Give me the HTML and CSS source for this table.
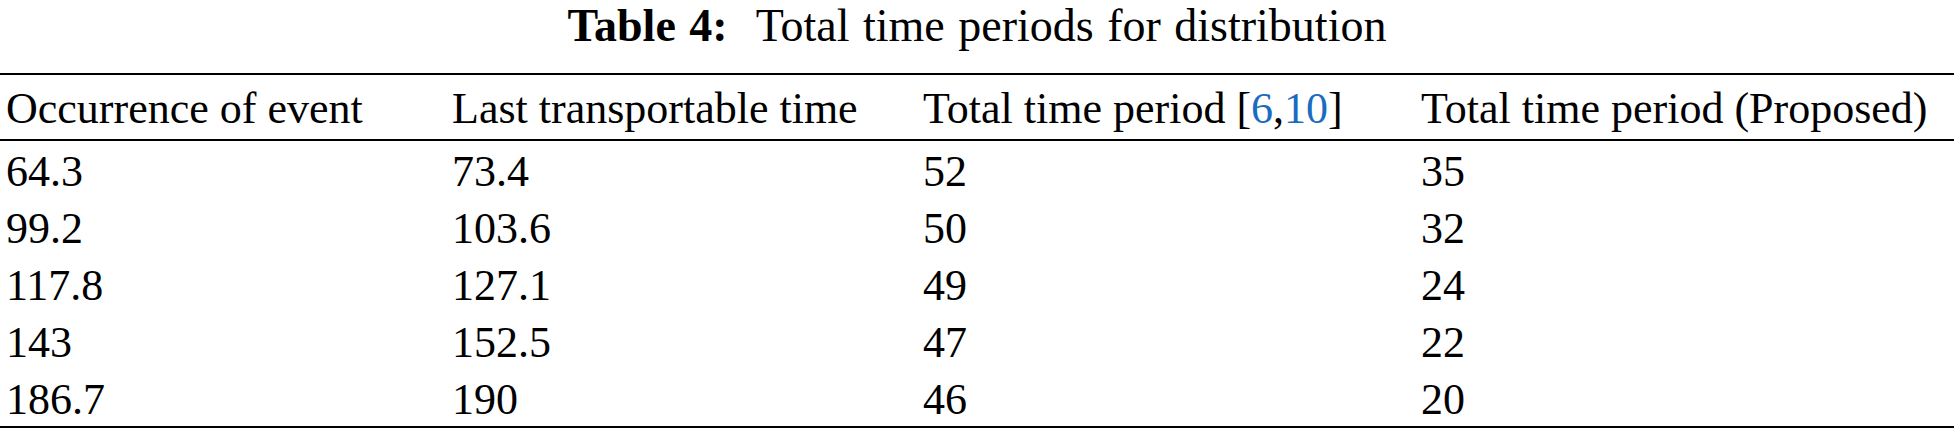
FILE: index.html
```html
<!DOCTYPE html>
<html>
<head>
<meta charset="utf-8">
<link rel="stylesheet" href="styles.css">
</head>
<body>
<div class="caption"><span class="label">Table 4:</span><span class="title">Total time periods for distribution</span></div>
<table class="data">
  <colgroup>
    <col class="c1"><col class="c2"><col class="c3"><col class="c4">
  </colgroup>
  <thead>
    <tr><th>Occurrence of event</th><th>Last transportable time</th><th>Total time period [<a class="ref">6</a>,<a class="ref">10</a>]</th><th>Total time period (Proposed)</th></tr>
  </thead>
  <tbody>
    <tr><td>64.3</td><td>73.4</td><td>52</td><td>35</td></tr>
    <tr><td>99.2</td><td>103.6</td><td>50</td><td>32</td></tr>
    <tr><td>117.8</td><td>127.1</td><td>49</td><td>24</td></tr>
    <tr><td>143</td><td>152.5</td><td>47</td><td>22</td></tr>
    <tr><td>186.7</td><td>190</td><td>46</td><td>20</td></tr>
  </tbody>
</table>
</body>
</html>
```
FILE: styles.css
```css
html, body {
  margin: 0;
  padding: 0;
  background: #ffffff;
}
body {
  font-family: "Liberation Serif", "Times New Roman", serif;
  color: #000000;
}
.caption {
  text-align: center;
  font-size: 46px;
  line-height: 51px;
  margin-bottom: 22px;
  white-space: nowrap;
  word-spacing: 2px;
}
.label {
  font-weight: bold;
  margin-right: 28px;
}
.data {
  width: 100%;
  border-collapse: collapse;
  table-layout: fixed;
  font-size: 44px;
  border-top: 2px solid #000;
  border-bottom: 2px solid #000;
}
.c1 { width: 446px; }
.c2 { width: 471px; }
.c3 { width: 498px; }
.data th, .data td {
  text-align: left;
  font-weight: normal;
  padding: 4px 0 0 6px;
  line-height: 53px;
  white-space: nowrap;
}
.data th {
  padding-top: 7px;
  padding-bottom: 4px;
  border-bottom: 2px solid #000;
}
.ref {
  color: #1a6cc0;
  text-decoration: none;
}
```
